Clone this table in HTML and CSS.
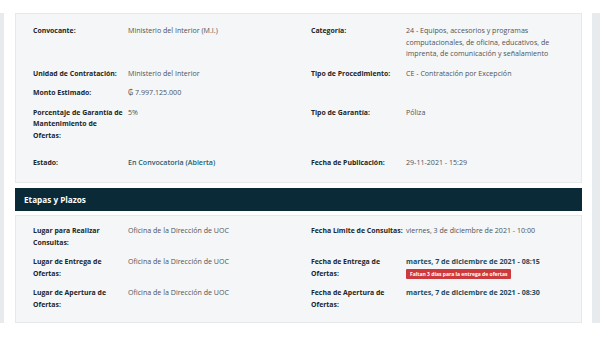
FILE: index.html
```html
<!DOCTYPE html>
<html lang="es">
<head>
<meta charset="utf-8">
<link rel="stylesheet" href="styles.css">
</head>
<body>
<div class="page">
  <div class="stripe stripe-left"></div>
  <main class="main">
    <section class="panel panel-top">
      <div class="grid">
        <div class="label">Convocante:</div>
        <div class="value">Ministerio del Interior (M.I.)</div>
        <div class="label">Categoría:</div>
        <div class="value">24 - Equipos, accesorios y programas computacionales, de oficina, educativos, de imprenta, de comunicación y señalamiento</div>

        <div class="label">Unidad de Contratación:</div>
        <div class="value">Ministerio del Interior</div>
        <div class="label">Tipo de Procedimiento:</div>
        <div class="value">CE - Contratación por Excepción</div>

        <div class="label">Monto Estimado:</div>
        <div class="value">₲ 7.997.125.000</div>
        <div class="label"></div>
        <div class="value"></div>

        <div class="label">Porcentaje de Garantía de Mantenimiento de Ofertas:</div>
        <div class="value">5%</div>
        <div class="label">Tipo de Garantía:</div>
        <div class="value">Póliza</div>

        <div class="label spaced">Estado:</div>
        <div class="value spaced status">En Convocatoria (Abierta)</div>
        <div class="label spaced">Fecha de Publicación:</div>
        <div class="value spaced">29-11-2021 - 15:29</div>
      </div>
    </section>

    <h2 class="section-title">Etapas y Plazos</h2>

    <section class="panel panel-bottom">
      <div class="grid">
        <div class="label">Lugar para Realizar Consultas:</div>
        <div class="value">Oficina de la Dirección de UOC</div>
        <div class="label">Fecha Límite de Consultas:</div>
        <div class="value">viernes, 3 de diciembre de 2021 - 10:00</div>

        <div class="label">Lugar de Entrega de Ofertas:</div>
        <div class="value">Oficina de la Dirección de UOC</div>
        <div class="label">Fecha de Entrega de Ofertas:</div>
        <div class="value">
          <span class="date">martes, 7 de diciembre de 2021 - 08:15</span>
          <span class="badge">Faltan 3 días para la entrega de ofertas</span>
        </div>

        <div class="label">Lugar de Apertura de Ofertas:</div>
        <div class="value">Oficina de la Dirección de UOC</div>
        <div class="label">Fecha de Apertura de Ofertas:</div>
        <div class="value"><span class="date">martes, 7 de diciembre de 2021 - 08:30</span></div>
      </div>
    </section>
  </main>
  <div class="stripe stripe-right"></div>
</div>
</body>
</html>
```

FILE: styles.css
```css
html, body {
  margin: 0;
  padding: 0;
  background: #ffffff;
}

body {
  font-family: "Open Sans", Lato, sans-serif;
  font-size: 6.9px;
  line-height: 11.5px;
  color: #505558;
}

.page {
  display: flex;
  align-items: stretch;
  padding-top: 13px;
}

.stripe {
  background: #e8ebee;
}

.stripe-left {
  width: 4px;
  margin-right: 11px;
}

.stripe-right {
  width: 8px;
  margin-left: 10px;
}

.main {
  width: 567px;
  display: flex;
  flex-direction: column;
}

.panel {
  background: #f4f6f8;
  border: 1px solid #e6e9ec;
  box-sizing: border-box;
}

.panel-top {
  height: 170px;
  padding: 11px 18px 0 17px;
}

.panel-bottom {
  height: 108px;
  padding: 9px 18px 0 17px;
  margin-top: 4px;
}

.grid {
  display: grid;
  grid-template-columns: 95px 183px 95px 1fr;
  row-gap: 8px;
  align-items: start;
}

.label {
  font-weight: 700;
  color: #222527;
  padding-right: 2px;
}

.value {
  color: #4f5457;
  font-size: 7.1px;
}

.spaced {
  margin-top: 8px;
}

.status {
  color: #24606f;
  font-weight: 600;
}

.section-title {
  margin: 5px 0 0;
  height: 23px;
  background: #0b2a38;
  color: #ffffff;
  font-size: 8.2px;
  font-weight: 700;
  line-height: 23px;
  padding-left: 9px;
}

.date {
  display: block;
  color: #1d4d5d;
  font-weight: 700;
}

.badge {
  display: inline-block;
  background: #cc3a3e;
  color: #ffffff;
  font-size: 5px;
  line-height: 10px;
  height: 10px;
  padding: 0 4px;
  border-radius: 1px;
  font-weight: 700;
}
```
